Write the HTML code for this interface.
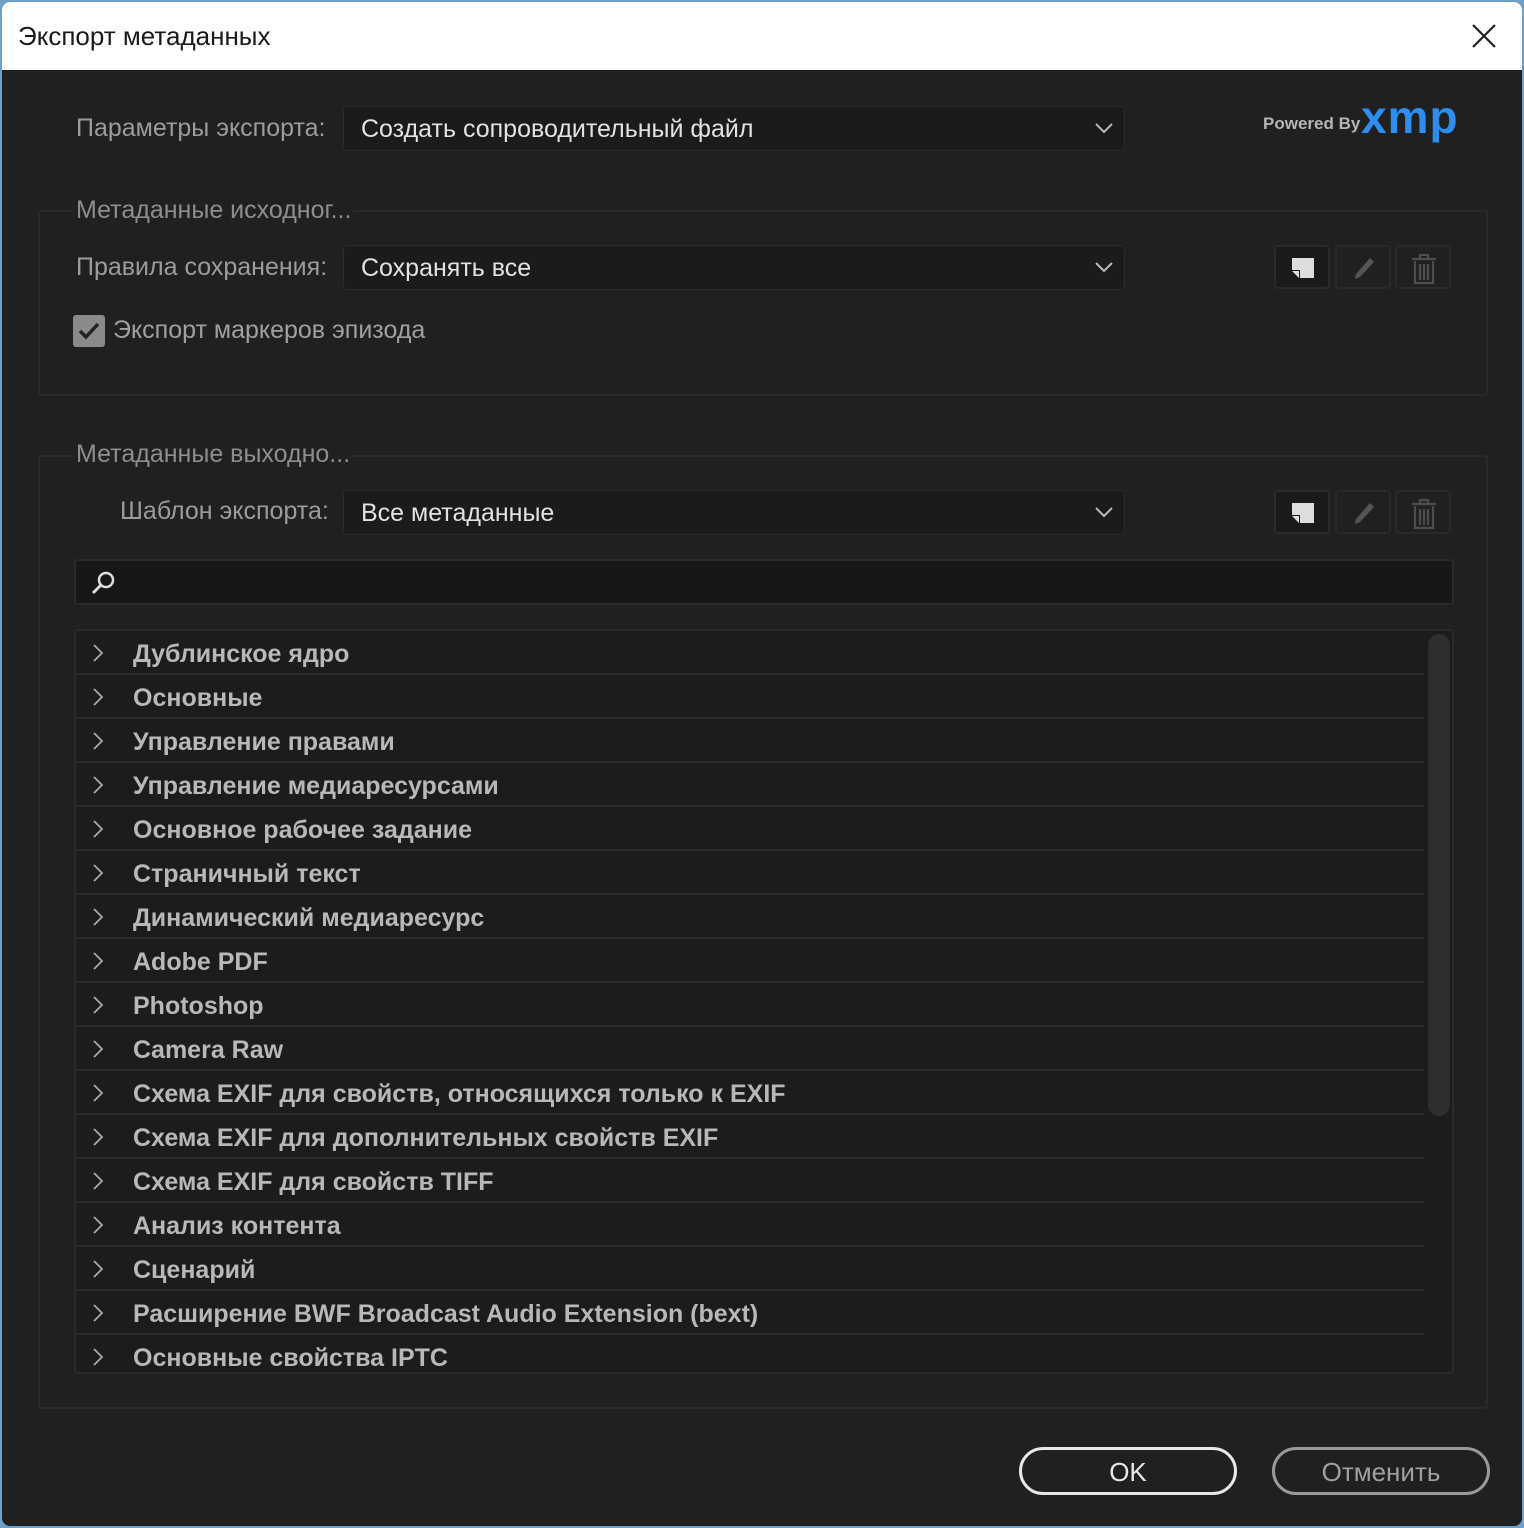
<!DOCTYPE html>
<html><head><meta charset="utf-8"><style>
*{box-sizing:border-box;margin:0;padding:0}
body{width:1524px;height:1528px;background:#6fa0c8;font-family:"Liberation Sans","DejaVu Sans",sans-serif;position:relative;overflow:hidden}
.win{position:absolute;left:2px;top:2px;width:1520px;height:1524px;background:#202020;border-radius:8px;overflow:hidden}
.title{position:absolute;left:0;top:0;width:1520px;height:68px;background:#fff}
.title span{position:absolute;left:16px;top:19px;font-size:26px;color:#1a1a1a}
.abs{position:absolute}
.lbl{position:absolute;font-size:25px;color:#9c9c9c;white-space:nowrap}
.dd{position:absolute;left:341px;width:782px;height:45px;background:#1b1b1b;border:1px solid #2c2c2c;border-radius:4px}
.dd span{position:absolute;left:17px;top:8px;font-size:25px;color:#e2e2e2}
.dd svg{position:absolute;right:10px;top:15px}
.group{position:absolute;left:36px;width:1450px;border:2px solid #2a2a2a;border-radius:3px}
.gt{position:absolute;font-size:25px;color:#8e8e8e;background:#202020;padding:0 2px;white-space:nowrap}
.btn{position:absolute;width:56px;height:44px;border:2px solid #2a2a2a;border-radius:4px}
.list{position:absolute;left:72px;top:627px;width:1380px;height:745px;background:#1c1c1c;border:2px solid #2a2a2a;border-radius:4px;overflow:hidden}
.row{position:absolute;left:0;width:1348px;height:44px;border-bottom:2px solid #2a2a2a}
.row b{position:absolute;left:57px;top:9px;font-size:25px;color:#b8b8b8;white-space:nowrap}
.row svg{position:absolute;left:16px;top:12px}
.pill{position:absolute;top:1445px;width:218px;height:48px;border-radius:24px;text-align:center;font-size:26px;line-height:44px}
</style></head><body>
<div class="win">
<div class="title"><span>Экспорт метаданных</span>
<svg class="abs" style="left:1469px;top:21px" width="26" height="26" viewBox="0 0 26 26"><path d="M2 2L24 24M24 2L2 24" stroke="#222" stroke-width="2.2"/></svg></div>

<div class="lbl" style="left:74px;top:112px">Параметры экспорта:</div>
<div class="dd" style="top:104px"><span>Создать сопроводительный файл</span><svg width="20" height="12" viewBox="0 0 20 12"><path d="M2 2L10 10L18 2" stroke="#bbb" stroke-width="2" fill="none"/></svg></div>
<div class="abs" style="left:1261px;top:112px;font-size:17px;color:#b5b5b5;font-weight:bold">Powered By</div>
<div class="abs" style="left:1359px;top:88px;font-size:46px;color:#2d8ef0;font-weight:bold;letter-spacing:1px">xmp</div>

<div class="group" style="top:208px;height:186px"></div>
<div class="gt" style="left:72px;top:194px">Метаданные исходног...</div>
<div class="lbl" style="left:74px;top:251px">Правила сохранения:</div>
<div class="dd" style="top:243px"><span>Сохранять все</span><svg width="20" height="12" viewBox="0 0 20 12"><path d="M2 2L10 10L18 2" stroke="#bbb" stroke-width="2" fill="none"/></svg></div>
<div class="abs" style="left:71px;top:313px;width:32px;height:32px;background:#8a8a8a;border-radius:3px"><svg width="32" height="32" viewBox="0 0 32 32"><path d="M7 16L13 22L25 9" stroke="#222" stroke-width="3.5" fill="none"/></svg></div>
<div class="lbl" style="left:111px;top:314px;color:#a0a0a0">Экспорт маркеров эпизода</div>

<div class="group" style="top:453px;height:954px"></div>
<div class="gt" style="left:72px;top:438px">Метаданные выходно...</div>
<div class="lbl" style="left:118px;top:495px">Шаблон экспорта:</div>
<div class="dd" style="top:488px"><span>Все метаданные</span><svg width="20" height="12" viewBox="0 0 20 12"><path d="M2 2L10 10L18 2" stroke="#bbb" stroke-width="2" fill="none"/></svg></div>

<div class="abs" style="left:72px;top:557px;width:1380px;height:46px;background:#171717;border:2px solid #2a2a2a;border-radius:4px">
<svg style="position:absolute;left:12px;top:7px" width="30" height="30" viewBox="0 0 30 30"><circle cx="18" cy="12" r="7" stroke="#ddd" stroke-width="2.5" fill="none"/><path d="M13 17L5 25" stroke="#ddd" stroke-width="3"/></svg></div>

<div class="list">
<div class="row" style="top:0">
<svg width="12" height="20" viewBox="0 0 12 20"><path d="M2 2L10 10L2 18" stroke="#aaa" stroke-width="1.8" fill="none"/></svg><b>Дублинское ядро</b></div>
<div class="row" style="top:44px"><svg width="12" height="20" viewBox="0 0 12 20"><path d="M2 2L10 10L2 18" stroke="#aaa" stroke-width="1.8" fill="none"/></svg><b>Основные</b></div>
<div class="row" style="top:88px"><svg width="12" height="20" viewBox="0 0 12 20"><path d="M2 2L10 10L2 18" stroke="#aaa" stroke-width="1.8" fill="none"/></svg><b>Управление правами</b></div>
<div class="row" style="top:132px"><svg width="12" height="20" viewBox="0 0 12 20"><path d="M2 2L10 10L2 18" stroke="#aaa" stroke-width="1.8" fill="none"/></svg><b>Управление медиаресурсами</b></div>
<div class="row" style="top:176px"><svg width="12" height="20" viewBox="0 0 12 20"><path d="M2 2L10 10L2 18" stroke="#aaa" stroke-width="1.8" fill="none"/></svg><b>Основное рабочее задание</b></div>
<div class="row" style="top:220px"><svg width="12" height="20" viewBox="0 0 12 20"><path d="M2 2L10 10L2 18" stroke="#aaa" stroke-width="1.8" fill="none"/></svg><b>Страничный текст</b></div>
<div class="row" style="top:264px"><svg width="12" height="20" viewBox="0 0 12 20"><path d="M2 2L10 10L2 18" stroke="#aaa" stroke-width="1.8" fill="none"/></svg><b>Динамический медиаресурс</b></div>
<div class="row" style="top:308px"><svg width="12" height="20" viewBox="0 0 12 20"><path d="M2 2L10 10L2 18" stroke="#aaa" stroke-width="1.8" fill="none"/></svg><b>Adobe PDF</b></div>
<div class="row" style="top:352px"><svg width="12" height="20" viewBox="0 0 12 20"><path d="M2 2L10 10L2 18" stroke="#aaa" stroke-width="1.8" fill="none"/></svg><b>Photoshop</b></div>
<div class="row" style="top:396px"><svg width="12" height="20" viewBox="0 0 12 20"><path d="M2 2L10 10L2 18" stroke="#aaa" stroke-width="1.8" fill="none"/></svg><b>Camera Raw</b></div>
<div class="row" style="top:440px"><svg width="12" height="20" viewBox="0 0 12 20"><path d="M2 2L10 10L2 18" stroke="#aaa" stroke-width="1.8" fill="none"/></svg><b>Схема EXIF для свойств, относящихся только к EXIF</b></div>
<div class="row" style="top:484px"><svg width="12" height="20" viewBox="0 0 12 20"><path d="M2 2L10 10L2 18" stroke="#aaa" stroke-width="1.8" fill="none"/></svg><b>Схема EXIF для дополнительных свойств EXIF</b></div>
<div class="row" style="top:528px"><svg width="12" height="20" viewBox="0 0 12 20"><path d="M2 2L10 10L2 18" stroke="#aaa" stroke-width="1.8" fill="none"/></svg><b>Схема EXIF для свойств TIFF</b></div>
<div class="row" style="top:572px"><svg width="12" height="20" viewBox="0 0 12 20"><path d="M2 2L10 10L2 18" stroke="#aaa" stroke-width="1.8" fill="none"/></svg><b>Анализ контента</b></div>
<div class="row" style="top:616px"><svg width="12" height="20" viewBox="0 0 12 20"><path d="M2 2L10 10L2 18" stroke="#aaa" stroke-width="1.8" fill="none"/></svg><b>Сценарий</b></div>
<div class="row" style="top:660px"><svg width="12" height="20" viewBox="0 0 12 20"><path d="M2 2L10 10L2 18" stroke="#aaa" stroke-width="1.8" fill="none"/></svg><b>Расширение BWF Broadcast Audio Extension (bext)</b></div>
<div class="row" style="top:704px;border:none"><svg width="12" height="20" viewBox="0 0 12 20"><path d="M2 2L10 10L2 18" stroke="#aaa" stroke-width="1.8" fill="none"/></svg><b>Основные свойства IPTC</b></div>
<div class="abs" style="left:1352px;top:3px;width:22px;height:482px;background:#2e2e2e;border-radius:11px"></div>
</div>

<div class="btn" style="left:1272px;top:243px;background:#1a1a1a"><svg style="position:absolute;left:14px;top:9px" width="26" height="24" viewBox="0 0 26 24"><path d="M2 2H24V22H10V14H2Z" fill="#ddd"/><path d="M2 15H9V22Z" fill="#ddd"/></svg></div>
<div class="btn" style="left:1333px;top:243px"><svg style="position:absolute;left:14px;top:8px" width="26" height="28" viewBox="0 0 26 28"><path d="M19 3L23 7L9 22L4 24L5 19Z" fill="#555"/></svg></div>
<div class="btn" style="left:1393px;top:243px"><svg style="position:absolute;left:12px;top:5px" width="30" height="34" viewBox="0 0 30 34"><path d="M3 7H27M11 7V3H19V7M6 9V31H24V9M11 12V28M15 12V28M19 12V28" stroke="#4e4e4e" stroke-width="2.2" fill="none"/></svg></div>

<div class="btn" style="left:1272px;top:488px;background:#1a1a1a"><svg style="position:absolute;left:14px;top:9px" width="26" height="24" viewBox="0 0 26 24"><path d="M2 2H24V22H10V14H2Z" fill="#ddd"/><path d="M2 15H9V22Z" fill="#ddd"/></svg></div>
<div class="btn" style="left:1333px;top:488px"><svg style="position:absolute;left:14px;top:8px" width="26" height="28" viewBox="0 0 26 28"><path d="M19 3L23 7L9 22L4 24L5 19Z" fill="#555"/></svg></div>
<div class="btn" style="left:1393px;top:488px"><svg style="position:absolute;left:12px;top:5px" width="30" height="34" viewBox="0 0 30 34"><path d="M3 7H27M11 7V3H19V7M6 9V31H24V9M11 12V28M15 12V28M19 12V28" stroke="#4e4e4e" stroke-width="2.2" fill="none"/></svg></div>

<div class="pill" style="left:1017px;border:3px solid #e8e8e8;color:#e8e8e8">OK</div>
<div class="pill" style="left:1270px;border:3px solid #9a9a9a;color:#a0a0a0">Отменить</div>
</div>
</body></html>
